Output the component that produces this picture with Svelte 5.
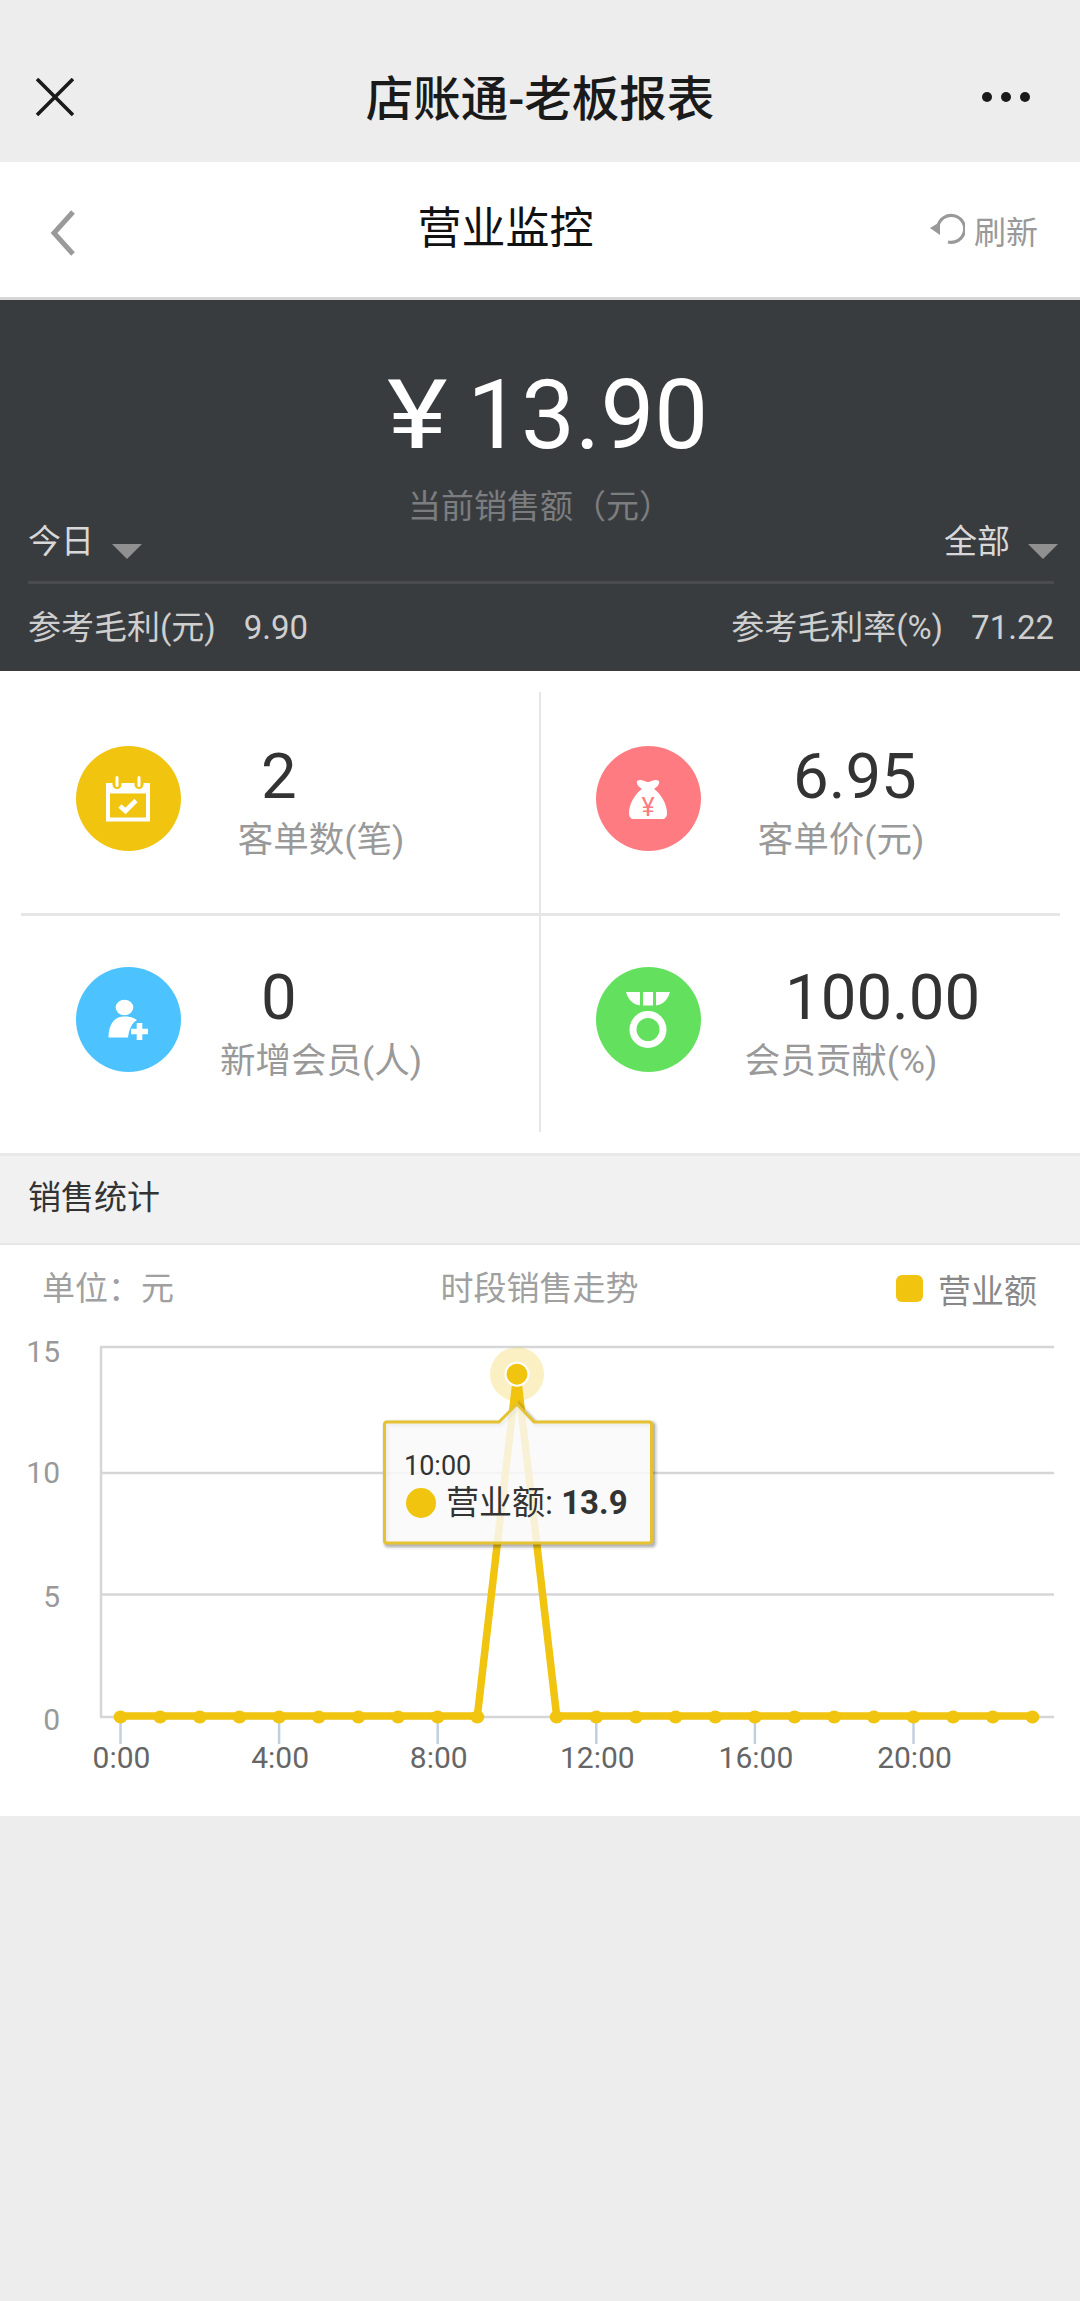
<script>
  const stats = [
    { key: 'orders', value: '2', label: '客单数(笔)' },
    { key: 'price', value: '6.95', label: '客单价(元)' },
    { key: 'members', value: '0', label: '新增会员(人)' },
    { key: 'share', value: '100.00', label: '会员贡献(%)' }
  ]

  // hourly takings, only the 10:00 slot sold anything
  const hours = Array.from({ length: 24 }, (_, h) => (h === 10 ? 13.9 : 0))

  const plotLeft = 100
  const plotRight = 1054
  const plotTop = 31
  const plotBottom = 401
  const xOf = (h) => 120.5 + h * 39.65
  const yOf = (v) => plotBottom - v * ((plotBottom - plotTop) / 15)

  const linePoints = hours.map((v, h) => `${xOf(h)},${yOf(v) - 1}`).join(' ')
  const yTicks = [
    { value: 15, line: 31, text: 46 },
    { value: 10, line: 157, text: 167 },
    { value: 5, line: 278.5, text: 291 },
    { value: 0, line: 401, text: 414 }
  ]
  const xTicks = [0, 4, 8, 12, 16, 20]

  const tipX = xOf(10)
  const tipY = yOf(13.9)
  const tooltipPath = 'M387 106 H499 L517 88 L534 106 H649 Q651.5 106 651.5 108.5 V224.5 Q651.5 227 649 227 H387 Q384.5 227 384.5 224.5 V108.5 Q384.5 106 387 106 Z'
</script>

<div class="page">
  <header class="wx-bar">
    <svg class="close" width="38" height="38" viewBox="0 0 38 38">
      <path d="M1 1 L37 37 M37 1 L1 37" />
    </svg>
    <h1>店账通-老板报表</h1>
    <div class="dots"><i></i><i></i><i></i></div>
  </header>

  <nav class="nav">
    <svg class="back" width="26" height="46" viewBox="0 0 26 46">
      <path d="M23 2 L4 23 L23 44" />
    </svg>
    <h2>营业监控</h2>
    <div class="refresh">
      <svg width="36" height="36" viewBox="0 0 36 36">
        <path class="arc" d="M9 14 A13.5 13.5 0 1 1 19 30" />
        <path class="head" d="M1 16 L11 10 L11 23 Z" />
      </svg>
      <span>刷新</span>
    </div>
  </nav>

  <section class="hero">
    <div class="amount"><span class="yen">¥</span>13.90</div>
    <div class="caption">当前销售额（元）</div>
    <div class="filters">
      <div class="filter">今日<i class="caret"></i></div>
      <div class="filter">全部<i class="caret"></i></div>
    </div>
    <div class="metrics">
      <div><span>参考毛利(元)</span><span class="metric-value">9.90</span></div>
      <div><span>参考毛利率(%)</span><span class="metric-value">71.22</span></div>
    </div>
  </section>

  <section class="stats">
    {#each stats as s}
      <div class="cell {s.key}">
        <div class="badge">
          <svg width="104" height="104" viewBox="0 0 104 104">
            {#if s.key === 'orders'}
              <rect x="30" y="37" width="44" height="38.5" fill="#fff" />
              <rect x="34" y="47.5" width="36" height="24" fill="#f0c40f" />
              <rect x="36.5" y="29" width="9" height="14" rx="4.5" fill="#f0c40f" />
              <rect x="58.5" y="29" width="9" height="14" rx="4.5" fill="#f0c40f" />
              <rect x="39.5" y="30" width="3" height="11" rx="1.5" fill="#fff" />
              <rect x="61.5" y="30" width="3" height="11" rx="1.5" fill="#fff" />
              <path d="M44 60 L49.5 65 L60 54.5" fill="none" stroke="#fff" stroke-width="4.6" />
            {:else if s.key === 'price'}
              <path d="M41 35 C45 32 49 36 52 36 C55 36 59 32 63 35 C64 38 61 41 58 43 C65 48 71 58 71 67 C71 71 69 73 66 73 H38 C35 73 33 71 33 67 C33 58 39 48 46 43 C43 41 40 38 41 35 Z" fill="#fff" />
              <text x="52" y="70" text-anchor="middle" font-size="25" fill="#ff7b82">¥</text>
            {:else if s.key === 'members'}
              <ellipse cx="48.5" cy="40.5" rx="8.8" ry="7.8" fill="#fff" />
              <path d="M32.5 70.5 C32.5 58 38 50 47 49.5 C52 49 57 50 61 53 C56 56 53 62 52 70.5 Z" fill="#fff" />
              <path d="M63.5 56 V73 M55 64.5 H72" stroke="#fff" stroke-width="5.6" fill="none" />
            {:else}
              <path d="M30 25 H44 V38.5 C39 37.5 33 35 30 25 Z" fill="#fff" />
              <rect x="47" y="25" width="10" height="13.5" fill="#fff" />
              <path d="M74 25 H60 V38.5 C65 37.5 71 35 74 25 Z" fill="#fff" />
              <circle cx="52" cy="62.5" r="15" fill="none" stroke="#fff" stroke-width="7" />
            {/if}
          </svg>
        </div>
        <div class="body">
          <div class="num">{s.value}</div>
          <div class="label">{s.label}</div>
        </div>
      </div>
    {/each}
  </section>

  <div class="section-title">销售统计</div>

  <section class="chart">
    <div class="chart-head">
      <span class="unit">单位：元</span>
      <span class="chart-title">时段销售走势</span>
      <span class="legend"><i></i>营业额</span>
    </div>
    <svg class="plot" width="1080" height="500" viewBox="0 0 1080 500">
      {#each yTicks as t}
        <line class="grid" x1={plotLeft} x2={plotRight} y1={t.line} y2={t.line} />
        <text class="y-label" x="60" y={t.text} text-anchor="end">{t.value}</text>
      {/each}
      <line class="grid" x1="101" x2="101" y1={plotTop} y2={plotBottom} />

      {#each xTicks as h}
        <line class="tick" x1={xOf(h)} x2={xOf(h)} y1="406" y2="428" />
        <text class="x-label" x={xOf(h) + 1} y="452" text-anchor="middle">{h}:00</text>
      {/each}

      <polyline class="series" points={linePoints} />
      {#each hours as v, h}
        {#if h !== 10}
          <ellipse cx={xOf(h)} cy={yOf(v)} rx="7" ry="6.5" fill="#f0c40f" />
        {/if}
      {/each}

      <circle cx={tipX} cy={tipY} r="27" fill="#f0c40f" opacity="0.25" />
      <circle cx={tipX} cy={tipY} r="11.5" fill="#f0c40f" stroke="#fff" stroke-width="2" />

      <!-- tooltip, with a soft stepped shadow under the outline -->
      <g class="tip-shadow" transform="translate(2 2)">
        <path d={tooltipPath} stroke-width="9" opacity="0.05" />
        <path d={tooltipPath} stroke-width="6" opacity="0.1" />
        <path d={tooltipPath} stroke-width="3" opacity="0.15" />
      </g>
      <path class="tip-box" d={tooltipPath} />
      <text class="tip-time" x="404" y="159">10:00</text>
      <circle cx="421" cy="187" r="15" fill="#f0c40f" />
      <text class="tip-row" x="446" y="198">营业额: <tspan font-weight="700">13.9</tspan></text>
    </svg>
  </section>
</div>

<style>
  :global(body) {
    background: #ededed;
    font-family: Roboto, "Noto Sans CJK SC", sans-serif;
  }

  .page {
    width: 1080px;
    min-height: 2301px;
    background: #ededed;
  }

  .wx-bar {
    height: 130px;
    padding: 32px 50px 0;
    display: grid;
    grid-template-columns: 1fr auto 1fr;
    align-items: center;
    background: #ededed;
  }

  .close {
    margin-left: -14px;
  }

  .close path {
    fill: none;
    stroke: #1a1a1a;
    stroke-width: 3.6;
  }

  .wx-bar h1 {
    margin: 5px 0 0;
    font-size: 47.5px;
    font-weight: 500;
    color: #1a1a1a;
    line-height: 60px;
  }

  .dots {
    justify-self: end;
    display: flex;
    gap: 9px;
  }

  .dots i {
    width: 10px;
    height: 10px;
    border-radius: 50%;
    background: #1a1a1a;
  }

  .nav {
    height: 138px;
    box-sizing: border-box;
    border-bottom: 3px solid #d6d6d6;
    background: #fff;
    padding: 0 42px 0 50px;
    display: flex;
    align-items: center;
    justify-content: space-between;
  }

  .back {
    margin-top: 6px;
  }

  .back path {
    fill: none;
    stroke: #9a9a9a;
    stroke-width: 5;
  }

  .nav h2 {
    margin: 0 0 10px 6px;
    font-size: 44px;
    font-weight: 400;
    color: #111;
  }

  .refresh {
    display: flex;
    align-items: center;
    gap: 9px;
    font-size: 32px;
    color: #999;
  }

  .refresh .arc {
    fill: none;
    stroke: #999;
    stroke-width: 3.2;
  }

  .refresh .head {
    fill: #999;
  }

  .hero {
    height: 371px;
    box-sizing: border-box;
    padding: 65px 22px 0 28px;
    background: #393c3f;
    color: #d8d8d8;
  }

  .amount {
    font-size: 96px;
    line-height: 100px;
    color: #fff;
    text-align: center;
    margin-left: 14px;
  }

  .yen {
    display: inline-block;
    margin-right: 25px;
    transform: scaleX(1.2);
  }

  .caption {
    margin: 20px 6px 0 0;
    font-size: 33px;
    line-height: 44px;
    color: #7c7d7f;
    text-align: center;
  }

  .filters {
    margin: -7px 4px 0 0;
    padding-bottom: 19px;
    display: flex;
    justify-content: space-between;
    border-bottom: 3px solid #4a4b4e;
  }

  .filter {
    font-size: 33px;
    line-height: 40px;
    display: flex;
    margin-right: -4px;
  }

  .caret {
    margin: 22px 0 0 18px;
    border-left: 15px solid transparent;
    border-right: 15px solid transparent;
    border-top: 15px solid #909090;
  }

  .metrics {
    padding-top: 22px;
    margin-right: 4px;
    display: flex;
    justify-content: space-between;
    font-size: 33px;
    line-height: 44px;
    color: #cfcfcf;
  }

  .metric-value {
    margin-left: 28px;
  }

  .stats {
    height: 482px;
    box-sizing: border-box;
    padding: 21px 20px 21px 21px;
    background: #fff;
    display: grid;
    grid-template-columns: 520px 519px;
    grid-template-rows: 224px 216px;
  }

  .cell {
    display: flex;
    align-items: flex-start;
  }

  .cell:nth-child(-n + 2) {
    border-bottom: 3px solid #e6e6e6;
    padding-top: 54px;
    box-sizing: border-box;
  }

  .cell:nth-child(n + 3) {
    padding-top: 51px;
    box-sizing: border-box;
  }

  .cell:nth-child(odd) {
    border-right: 2px solid #e6e6e6;
    padding-left: 55px;
  }

  .cell:nth-child(even) {
    padding-left: 55px;
  }

  .badge {
    width: 105px;
    height: 105px;
    flex: none;
    border-radius: 50%;
  }

  .badge svg {
    display: block;
  }

  .orders .badge { background: #f0c40f; }
  .price .badge { background: #ff7b82; }
  .members .badge { background: #4cc3ff; }
  .share .badge { background: #64e05f; }

  .body {
    width: 280px;
    margin-top: -1px;
  }

  .num {
    font-size: 63.5px;
    line-height: 64px;
    color: #333;
    padding-left: 80px;
  }

  .price .num { padding-left: 92px; }
  .share .num { padding-left: 84px; }

  .label {
    margin-top: 6px;
    font-size: 35.5px;
    line-height: 50px;
    color: #999;
    text-align: center;
  }

  .section-title {
    height: 92px;
    box-sizing: border-box;
    border-top: 3px solid #e8e8e8;
    border-bottom: 2px solid #e6e6e6;
    background: #f1f1f1;
    padding: 0 28px;
    font-size: 33px;
    line-height: 84px;
    color: #333;
  }

  .chart {
    background: #fff;
  }

  .chart-head {
    height: 49px;
    padding: 22px 43px 0 42px;
    display: grid;
    grid-template-columns: 1fr auto 1fr;
    font-size: 33px;
    line-height: 44px;
    color: #a0a0a0;
  }

  .legend {
    justify-self: end;
    display: flex;
    align-items: center;
    color: #888;
  }

  .legend i {
    width: 27px;
    height: 27px;
    margin: 0 15px 0 0;
    border-radius: 6px;
    background: #f0c40f;
    position: relative;
    top: -3px;
  }

  .plot {
    display: block;
  }

  .grid {
    stroke: #d6d6d6;
    stroke-width: 2.5;
  }

  .tick {
    stroke: #c0d0e0;
    stroke-width: 2.5;
  }

  .y-label {
    font-size: 30px;
    fill: #999;
  }

  .x-label {
    font-size: 30px;
    fill: #666;
  }

  .series {
    fill: none;
    stroke: #f0c40f;
    stroke-width: 7.5;
    stroke-linejoin: miter;
  }

  .tip-shadow path {
    fill: none;
    stroke: #000;
  }

  .tip-box {
    fill: rgba(249, 249, 249, 0.85);
    stroke: #e5c232;
    stroke-width: 3;
  }

  .tip-time {
    font-size: 27px;
    fill: #333;
  }

  .tip-row {
    font-size: 33px;
    fill: #333;
  }
</style>
